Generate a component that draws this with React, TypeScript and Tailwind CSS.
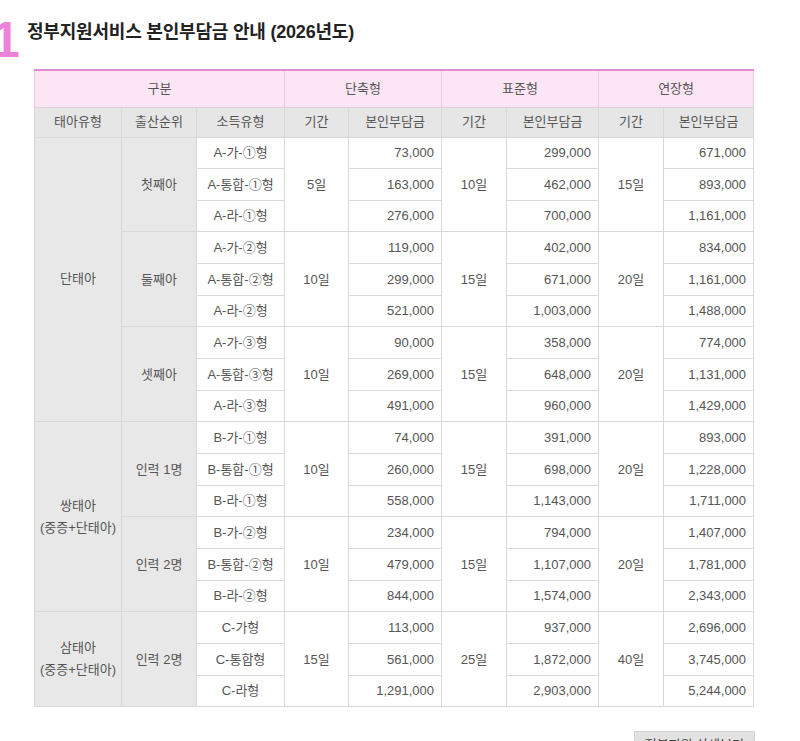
import React from 'react';

type Group = {
  order: string;
  types: string[];
  short: [string, string[]];
  standard: [string, string[]];
  extended: [string, string[]];
};

type Section = { name: React.ReactNode; groups: Group[] };

const sections: Section[] = [
  {
    name: '단태아',
    groups: [
      {
        order: '첫째아',
        types: ['A-가-①형', 'A-통합-①형', 'A-라-①형'],
        short: ['5일', ['73,000', '163,000', '276,000']],
        standard: ['10일', ['299,000', '462,000', '700,000']],
        extended: ['15일', ['671,000', '893,000', '1,161,000']],
      },
      {
        order: '둘째아',
        types: ['A-가-②형', 'A-통합-②형', 'A-라-②형'],
        short: ['10일', ['119,000', '299,000', '521,000']],
        standard: ['15일', ['402,000', '671,000', '1,003,000']],
        extended: ['20일', ['834,000', '1,161,000', '1,488,000']],
      },
      {
        order: '셋째아',
        types: ['A-가-③형', 'A-통합-③형', 'A-라-③형'],
        short: ['10일', ['90,000', '269,000', '491,000']],
        standard: ['15일', ['358,000', '648,000', '960,000']],
        extended: ['20일', ['774,000', '1,131,000', '1,429,000']],
      },
    ],
  },
  {
    name: (
      <>
        쌍태아
        <br />
        (중증+단태아)
      </>
    ),
    groups: [
      {
        order: '인력 1명',
        types: ['B-가-①형', 'B-통합-①형', 'B-라-①형'],
        short: ['10일', ['74,000', '260,000', '558,000']],
        standard: ['15일', ['391,000', '698,000', '1,143,000']],
        extended: ['20일', ['893,000', '1,228,000', '1,711,000']],
      },
      {
        order: '인력 2명',
        types: ['B-가-②형', 'B-통합-②형', 'B-라-②형'],
        short: ['10일', ['234,000', '479,000', '844,000']],
        standard: ['15일', ['794,000', '1,107,000', '1,574,000']],
        extended: ['20일', ['1,407,000', '1,781,000', '2,343,000']],
      },
    ],
  },
  {
    name: (
      <>
        삼태아
        <br />
        (중증+단태아)
      </>
    ),
    groups: [
      {
        order: '인력 2명',
        types: ['C-가형', 'C-통합형', 'C-라형'],
        short: ['15일', ['113,000', '561,000', '1,291,000']],
        standard: ['25일', ['937,000', '1,872,000', '2,903,000']],
        extended: ['40일', ['2,696,000', '3,745,000', '5,244,000']],
      },
    ],
  },
];

const cell = 'border border-[#d9d9d9] text-center align-middle';
const grayCell = `${cell} bg-[#e8e8e8]`;
const whiteCell = `${cell} bg-white`;
const numCell = 'border border-[#d9d9d9] bg-white text-right pr-[7px] align-middle';

const App: React.FC = () => {
  return (
    <div
      className="w-[800px] h-[741px] overflow-hidden bg-white text-[#555]"
      style={{ fontFamily: '"Liberation Sans", "Noto Sans CJK KR", sans-serif' }}
    >
      {/* Title */}
      <div className="flex items-start h-[69px]">
        <span className="text-[#ec82da] text-[50px] leading-none font-bold ml-[-8px] mt-[15px] w-[35px]">1</span>
        <h2 className="mt-[19px] text-[18px] font-semibold text-[#222] tracking-[-0.2px]">
          정부지원서비스 본인부담금 안내 (2026년도)
        </h2>
      </div>

      {/* Table */}
      <table className="ml-[34px] w-[719px] border-collapse table-fixed text-[13px] border-t-2 border-t-[#e38ad4]">
        <colgroup>
          <col className="w-[87px]" />
          <col className="w-[75px]" />
          <col className="w-[88px]" />
          <col className="w-[64px]" />
          <col className="w-[93px]" />
          <col className="w-[65px]" />
          <col className="w-[92px]" />
          <col className="w-[65px]" />
          <col className="w-[90px]" />
        </colgroup>
        <thead>
          <tr className="h-[37px] bg-[#fce6f6]">
            <th colSpan={3} className="border border-[#e8cde0] border-t-[#e38ad4] font-normal">구분</th>
            <th colSpan={2} className="border border-[#e8cde0] border-t-[#e38ad4] font-normal">단축형</th>
            <th colSpan={2} className="border border-[#e8cde0] border-t-[#e38ad4] font-normal">표준형</th>
            <th colSpan={2} className="border border-[#e8cde0] border-t-[#e38ad4] font-normal">연장형</th>
          </tr>
          <tr className="h-[30px] bg-[#e6e6e6]">
            {['태아유형', '출산순위', '소득유형', '기간', '본인부담금', '기간', '본인부담금', '기간', '본인부담금'].map((h, i) => (
              <th key={i} className="border border-[#d9d9d9] font-normal">{h}</th>
            ))}
          </tr>
        </thead>
        <tbody>
          {sections.map((s, si) =>
            s.groups.map((g, gi) =>
              g.types.map((t, ti) => (
                <tr key={`${si}-${gi}-${ti}`} className="h-[31.67px]">
                  {gi === 0 && ti === 0 && (
                    <td rowSpan={s.groups.length * 3} className={`${grayCell} leading-[22px]`}>
                      {s.name}
                    </td>
                  )}
                  {ti === 0 && (
                    <td rowSpan={3} className={grayCell}>
                      {g.order}
                    </td>
                  )}
                  <td className={whiteCell}>{t}</td>
                  {ti === 0 && (
                    <td rowSpan={3} className={whiteCell}>
                      {g.short[0]}
                    </td>
                  )}
                  <td className={numCell}>{g.short[1][ti]}</td>
                  {ti === 0 && (
                    <td rowSpan={3} className={whiteCell}>
                      {g.standard[0]}
                    </td>
                  )}
                  <td className={numCell}>{g.standard[1][ti]}</td>
                  {ti === 0 && (
                    <td rowSpan={3} className={whiteCell}>
                      {g.extended[0]}
                    </td>
                  )}
                  <td className={numCell}>{g.extended[1][ti]}</td>
                </tr>
              ))
            )
          )}
        </tbody>
      </table>

      {/* Bottom button */}
      <div className="flex justify-end w-[755px] mt-[24px]">
        <button className="bg-[#e2e2e2] text-[#444] text-[13px] px-[10px] h-[26px] border border-[#d4d4d4]">
          정부지원 상세보기
        </button>
      </div>
    </div>
  );
};

export default App;
